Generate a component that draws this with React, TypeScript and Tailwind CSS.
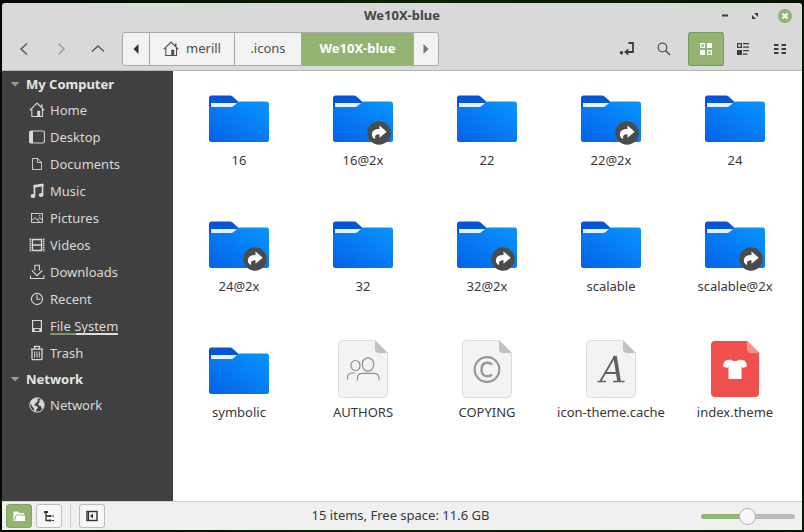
import React, { useState } from "react";
import clsx from "clsx";

type IconProps = { className?: string };

const HomeIcon: React.FC<IconProps> = ({ className }) => (
  <svg viewBox="0 0 16 16" className={clsx("h-4 w-4", className)} fill="none" stroke="currentColor">
    <path d="M.7 8.3 8 1l7.3 7.3" strokeWidth="1.2" />
    <path d="M2.8 6.8v7.7h10.7V6.8" strokeWidth="1.1" />
    <path d="M12 2.5h1.5v3.3L12 4.3z" fill="currentColor" stroke="none" />
    <path d="M8.2 8.8h3v5.7h-3z" fill="currentColor" stroke="none" />
  </svg>
);

const DesktopIcon = () => (
  <svg viewBox="0 0 16 16" className="h-4 w-4" fill="none" stroke="currentColor">
    <rect x=".6" y="2" width="14.8" height="12" rx="1.5" strokeWidth="1.1" />
    <path d="M.5 3.5Q.5 2 2 2h2v12H2q-1.5 0-1.5-1.5z" fill="currentColor" stroke="none" />
  </svg>
);

const DocumentIcon = () => (
  <svg viewBox="0 0 16 16" className="h-4 w-4" fill="none" stroke="currentColor" strokeWidth=".9">
    <path d="M3.5 2.5h5.3l3.7 3.8v7.2h-9z" />
    <path d="M8.5 2.5v4h4" />
  </svg>
);

const MusicIcon = () => (
  <svg viewBox="0 0 16 16" className="h-4 w-4" fill="currentColor">
    <path d="M4.6 2 14.4.6v2.6L4.6 4.8z" />
    <path d="M4.6 2h1.7v10.8H4.6zM12.7 1h1.7v10.8h-1.7z" />
    <ellipse cx="4" cy="13" rx="2.4" ry="2.1" />
    <ellipse cx="12.1" cy="12" rx="2.4" ry="2.1" />
  </svg>
);

const PictureIcon = () => (
  <svg viewBox="0 0 16 16" className="h-4 w-4" fill="none" stroke="currentColor">
    <rect x="2.5" y="3.5" width="11" height="9" strokeWidth=".9" />
    <path d="m3 10.5 3-3 4.5 4.5M8.5 9.8l2.3-2.1 2.5 2.3" />
    <circle cx="10.8" cy="5.8" r=".8" fill="currentColor" stroke="none" />
  </svg>
);

const VideoIcon = () => (
  <svg viewBox="0 0 16 16" className="h-4 w-4" fill="none" stroke="currentColor">
    <path d="M3.5 2.5h9v11h-9zM3.5 8h9" strokeWidth="1.3" />
    <path d="M1.4 1.5v13M14.6 1.5v13" strokeWidth="1.7" strokeDasharray="1.5 .6" />
  </svg>
);

const DownloadIcon = () => (
  <svg viewBox="0 0 16 16" className="h-4 w-4" fill="none" stroke="currentColor">
    <path d="M5.8 6.5V1.2h4.6v5.3M2.8 6.3 8 11.6l5.3-5.3M1.5 11.5v3h13.3v-3" strokeWidth="1.1" />
  </svg>
);

const RecentIcon = () => (
  <svg viewBox="0 0 16 16" className="h-4 w-4" fill="none" stroke="currentColor">
    <circle cx="8" cy="8" r="5.6" strokeWidth="1.1" />
    <path d="M8 4v4.2h3.6" strokeWidth="1.1" />
  </svg>
);

const DriveIcon = () => (
  <svg viewBox="0 0 16 16" className="h-4 w-4" fill="none" stroke="currentColor">
    <path d="M3.6 2.5h8.8v11H3.6z" strokeWidth="1.2" />
    <path d="M3.5 10.5h9" strokeWidth=".9" />
    <path d="M3.5 11h2.2v2.5H3.5zM10.3 11h2.2v2.5h-2.2z" fill="currentColor" stroke="none" />
  </svg>
);

const TrashIcon = () => (
  <svg viewBox="0 0 16 16" className="h-4 w-4" fill="none" stroke="currentColor">
    <path d="M1.8 4.1h12.4M5.6 3.5V1.4h4.8v2.1" strokeWidth="1.4" />
    <path d="M3 4.5v9q0 1.2 1.2 1.2h7.6q1.2 0 1.2-1.2v-9" strokeWidth="1.3" />
    <path d="M5.7 6.5v6M8 6.5v6M10.3 6.5v6" />
  </svg>
);

const NetworkIcon = () => (
  <svg viewBox="0 0 16 16" className="h-4 w-4">
    <circle cx="8" cy="8" r="7.2" fill="none" stroke="currentColor" />
    <path
      d="M1.3 5.8Q2.6 1.9 7.2 1l2 .8-1 1.3.8 1.1-1.8 1.3-1.2 1.8-1.2.9 2.7.7 1.6 1.6-1.6 2-.8 2.3-1.5-.4-.5-3.3-1.5-1.7zM10.2 3.4l1.8-.9q3 2 3.1 5.5l-1 3.1-1.5.7-.7-2.8-2.2-.6-.5-2 1.6-1.1z"
      fill="currentColor"
    />
  </svg>
);

const places = [
  { name: "Home", icon: <HomeIcon /> },
  { name: "Desktop", icon: <DesktopIcon /> },
  { name: "Documents", icon: <DocumentIcon /> },
  { name: "Music", icon: <MusicIcon /> },
  { name: "Pictures", icon: <PictureIcon /> },
  { name: "Videos", icon: <VideoIcon /> },
  { name: "Downloads", icon: <DownloadIcon /> },
  { name: "Recent", icon: <RecentIcon /> },
  { name: "File System", icon: <DriveIcon />, usage: 38 },
  { name: "Trash", icon: <TrashIcon /> },
];

type FileKind = "folder" | "link" | "authors" | "copying" | "font" | "theme";

const files: { name: string; kind: FileKind }[] = [
  { name: "16", kind: "folder" },
  { name: "16@2x", kind: "link" },
  { name: "22", kind: "folder" },
  { name: "22@2x", kind: "link" },
  { name: "24", kind: "folder" },
  { name: "24@2x", kind: "link" },
  { name: "32", kind: "folder" },
  { name: "32@2x", kind: "link" },
  { name: "scalable", kind: "folder" },
  { name: "scalable@2x", kind: "link" },
  { name: "symbolic", kind: "folder" },
  { name: "AUTHORS", kind: "authors" },
  { name: "COPYING", kind: "copying" },
  { name: "icon-theme.cache", kind: "font" },
  { name: "index.theme", kind: "theme" },
];

const FolderArt = ({ linked }: { linked: boolean }) => (
  <svg viewBox="0 0 64 64" className="h-16 w-16">
    <defs>
      <linearGradient id="folder-front" x1="0" y1="1" x2="1" y2="0">
        <stop offset="0" stopColor="#0561e6" />
        <stop offset="1" stopColor="#0795ff" />
      </linearGradient>
    </defs>
    <path d="M2 11q0-2.5 2.5-2.5H23q1.5 0 2.6 1l6 5.5v12H2z" fill="#0456d6" />
    <path d="M4 16h27l-4 5H4z" fill="#e4f4fd" />
    <path
      d="M2 20h22q1.5 0 2.6-1l4-3.6q1.1-1 2.6-1h26.3q2.5 0 2.5 2.5v35.6q0 2.5-2.5 2.5h-55Q2 55 2 52.5z"
      fill="url(#folder-front)"
    />
    {linked && (
      <g>
        <circle cx="48" cy="46" r="11.7" fill="#4b4b4b" />
        <path
          d="M48.5 38.5l7.2 6.2-7.2 6v-3.4q-4.6-.2-4.4 3v1.7q-3.5-1.5-3.2-5 .4-4.9 7.6-5z"
          fill="#fff"
        />
      </g>
    )}
  </svg>
);

const PageArt = ({ kind }: { kind: FileKind }) => {
  const red = kind === "theme";
  return (
    <svg viewBox="0 0 64 64" className="h-16 w-16">
      <path
        d={
          red
            ? "M12 2h32l12 12v40q0 4-4 4H12q-4 0-4-4V6q0-4 4-4z"
            : "M11.5 1.5h33l12 12v41q0 4-4 4h-41q-4 0-4-4v-49q0-4 4-4z"
        }
        fill={red ? "#f0504e" : "#f3f3f3"}
        stroke={red ? "none" : "#dcdcdc"}
      />
      <path d="M44 1.5 56.5 14H48q-4 0-4-4z" fill={red ? "#f7908e" : "#c0c0c0"} />
      {kind === "authors" && (
        <g fill="none" stroke="#909090" strokeWidth="1.2">
          <ellipse cx="24.5" cy="26.5" rx="4.5" ry="5" />
          <ellipse cx="37" cy="25.5" rx="5.7" ry="6.7" />
          <path d="M16.5 40.5v-1.8q0-4.7 5-4.7H24M26.500 41.5V39q0-4.700 5-4.700H43q5 0 5 5v2" />
        </g>
      )}
      {kind === "copying" && (
        <g fill="none" stroke="#969696">
          <circle cx="32" cy="30.5" r="12.3" strokeWidth="2.2" />
          <path d="M37 25.5q-2-1.700-4.500-1.700-6 0-6 6.700t6 6.700q2.500 0 4.500-1.500" strokeWidth="2.4" />
        </g>
      )}
      {kind === "font" && (
        <g fill="none" stroke="#606060">
          <path d="m36 17-14.5 25M25.5 34H38" strokeWidth="1.8" />
          <path d="m36 17 4 25" strokeWidth="3.6" />
          <path d="M18.5 42.5h8.5M34 42.5h11.5" strokeWidth="1.7" />
        </g>
      )}
      {kind === "theme" && (
        <path
          d="M27.5 20.5q4.500 3 9 0l5 1q2.500 2 2.500 6l-4.500 1.500-1-2V40H25.500V27l-1 2-4.500-1.500q0-4 2.500-6z"
          fill="#fff"
        />
      )}
    </svg>
  );
};

const ToolButton = ({
  label,
  active,
  className,
  children,
}: {
  label: string;
  active?: boolean;
  className?: string;
  children: React.ReactNode;
}) => (
  <button
    aria-label={label}
    className={clsx(
      "flex h-[34px] w-9 items-center justify-center rounded-[2px] border",
      active ? "border-[#7c9b62] bg-[#92b372] text-white" : "border-transparent",
      className,
    )}
  >
    {children}
  </button>
);

const Chevron = ({ d }: { d: string }) => (
  <svg viewBox="0 0 16 16" className="h-4 w-4" fill="none" stroke="currentColor" strokeWidth="1.4">
    <path d={d} />
  </svg>
);

const TitleBar = () => (
  <div className="grid h-6 grid-cols-[1fr_auto_1fr] items-center px-2.5 pt-0.5">
    <h1 className="col-start-2 text-[13px] font-bold text-[#454545]">We10X-blue</h1>
    <div className="flex justify-end gap-4">
      <button aria-label="Minimize" className="h-3.5 w-3.5">
        <svg viewBox="0 0 14 14">
          <path d="M4 5.500h6v2H4z" fill="#3c3c3c" />
        </svg>
      </button>
      <button aria-label="Maximize" className="h-3.5 w-3.5">
        <svg viewBox="0 0 14 14" fill="#3c3c3c">
          <path d="M6 4h4v4zM4 6v4h4z" />
        </svg>
      </button>
      <button aria-label="Close" className="h-3.5 w-3.5 rounded-full bg-[#92b372]">
        <svg viewBox="0 0 14 14" fill="none" stroke="#fff" strokeWidth="2">
          <path d="m4.5 4.5 5 5M9.5 4.5l-5 5" />
        </svg>
      </button>
    </div>
  </div>
);

const PathBar = () => (
  <nav className="ml-[5px] flex h-[34px] divide-x divide-[#a9a9a9] overflow-hidden rounded-[3px] border border-[#a9a9a9] bg-[#f2f2f2] text-[13px] text-[#505050]">
    <button aria-label="Scroll left" className="flex w-[27px] items-center justify-center">
      <svg viewBox="0 0 10 10" className="h-2.5 w-2.5">
        <path d="M7.5 0v10l-5-5z" fill="#333" />
      </svg>
    </button>
    <button className="flex w-[85px] items-center justify-center gap-[7px]">
      <HomeIcon />
      merill
    </button>
    <button className="w-[67px]">.icons</button>
    <button className="w-28 bg-[#92b372] font-bold text-white">We10X-blue</button>
    <button aria-label="Scroll right" className="flex w-6 items-center justify-center">
      <svg viewBox="0 0 10 10" className="h-2.5 w-2.5">
        <path d="M2.5 0v10l5-5z" fill="#777" />
      </svg>
    </button>
  </nav>
);

const Toolbar = () => (
  <div className="flex h-11 items-center gap-px border-b border-[#b5b5b5] px-1 text-[#3c3c3c]">
    <ToolButton label="Back" className="text-[#555]">
      <Chevron d="M11 2.5 5 8l6 5.5" />
    </ToolButton>
    <ToolButton label="Forward" className="text-[#9b9b9b]">
      <Chevron d="M5.5 2.5 11 8l-5.5 5.5" />
    </ToolButton>
    <ToolButton label="Up" className="text-[#555]">
      <Chevron d="M2 10.5 8 5l6 5.5" />
    </ToolButton>
    <PathBar />
    <ToolButton label="Toggle location entry" className="ml-auto">
      <svg viewBox="0 0 16 16" className="h-4 w-4" fill="none" stroke="currentColor">
        <path d="M9.5 2H14v9H8.5" strokeWidth="1.8" />
        <path d="M9.3 7.5v7L5 11z" fill="currentColor" stroke="none" />
        <circle cx="2.5" cy="11.8" r="1.7" fill="currentColor" stroke="none" />
      </svg>
    </ToolButton>
    <ToolButton label="Search" className="text-[#555]">
      <svg viewBox="0 0 16 16" className="h-4 w-4" fill="none" stroke="currentColor">
        <circle cx="6.5" cy="6.5" r="4.3" strokeWidth="1.3" />
        <path d="m9.5 9.5 4.500 4.500" strokeWidth="1.7" />
      </svg>
    </ToolButton>
    <ToolButton label="Icon view" active className="ml-[5px]">
      <svg viewBox="0 0 16 16" className="h-4 w-4" fill="currentColor">
        <path d="M2 2h5v5H2zm1.3 1.3v2.4h2.4V3.3z" fillRule="evenodd" />
        <path d="M9 2h5v5H9zM2 9h5v5H2z" />
        <path d="M9 9h5v5H9zm1.3 1.3v2.4h2.4v-2.4z" fillRule="evenodd" />
      </svg>
    </ToolButton>
    <ToolButton label="List view">
      <svg viewBox="0 0 16 16" className="h-4 w-4" fill="currentColor">
        <path d="M2 2h5v5H2zm1.2 1.2v2.6h2.6V3.2z" fillRule="evenodd" />
        <path d="M2 9h5v5H2zM8 2h6v1.2H8zM8 5.5h6v1.2H8zM8 9h6v1.2H8zM8 12.5h4.5v1.2H8z" />
      </svg>
    </ToolButton>
    <ToolButton label="Compact view">
      <svg viewBox="0 0 16 16" className="h-4 w-4" fill="currentColor">
        <path d="M2 3h4.5v2H2zM2 7h4.5v2H2zM2 11h4.5v2H2zM9.500 3H14v2H9.500zM9.500 7H14v2H9.500zM9.500 11H14v2H9.500z" />
      </svg>
    </ToolButton>
  </div>
);

const SidebarHeading = ({ children }: { children: React.ReactNode }) => (
  <button className="flex h-[25px] w-full items-center gap-1.5 pl-2 font-bold text-[#e6e6e6]">
    <svg viewBox="0 0 10 10" className="h-2.5 w-2.5">
      <path d="M.5 3h9L5 7.5z" fill="#999" />
    </svg>
    {children}
  </button>
);

const SidebarItem = ({
  name,
  icon,
  usage,
}: {
  name: string;
  icon: React.ReactNode;
  usage?: number;
}) => (
  <a href="#" className="flex h-[27px] items-center gap-[5px] pl-[27px]">
    {icon}
    <span className="relative">
      {name}
      {/* disk usage */}
      {usage !== undefined && (
        <span className="absolute inset-x-0 bottom-0 h-0.5 bg-[#dedede]">
          <span className="block h-full bg-[#7b9a60]" style={{ width: `${usage}%` }} />
        </span>
      )}
    </span>
  </a>
);

const Sidebar = () => (
  <aside className="w-[171px] shrink-0 overflow-hidden bg-[#404040] text-[13px] leading-[18px] text-[#d8d8d8]">
    <SidebarHeading>My Computer</SidebarHeading>
    {places.map((p) => (
      <SidebarItem key={p.name} {...p} />
    ))}
    <SidebarHeading>Network</SidebarHeading>
    <SidebarItem name="Network" icon={<NetworkIcon />} />
  </aside>
);

const StatusButton = ({
  label,
  active,
  children,
}: {
  label: string;
  active?: boolean;
  children: React.ReactNode;
}) => (
  <button
    aria-label={label}
    className={clsx(
      "flex h-6 w-[26px] items-center justify-center rounded-[3px] border",
      active ? "border-[#86a668] bg-[#92b372] text-white" : "border-[#bdbdbd] bg-[#f7f7f7] text-[#333]",
    )}
  >
    {children}
  </button>
);

const StatusBar = () => {
  const [zoom, setZoom] = useState(49);

  return (
    <footer className="grid h-[29px] shrink-0 grid-cols-[1fr_auto_1fr] items-center border-t border-[#d0d0d0] bg-[#f0f0f0] pr-[7px] pl-1">
      <div className="flex items-center gap-1">
        <StatusButton label="Show places" active>
          <svg viewBox="0 0 16 16" className="h-4 w-4" fill="currentColor">
            <path d="M2.5 3.5H7L8 5h5v1.5H5L3.5 10v3h-1z" />
            <path d="M5.3 7.5H14V13H4z" />
          </svg>
        </StatusButton>
        <StatusButton label="Show treeview">
          <svg viewBox="0 0 16 16" className="h-4 w-4" fill="none" stroke="currentColor">
            <path d="M5 4v8.5h3M5 8h3" strokeWidth="1.3" />
            <path d="M3 3h4v2H3zM8 7h2v2H8zM8 11.5h2v2H8z" fill="currentColor" stroke="none" />
            <path d="M10.5 8H13M10.5 12.5H13" />
          </svg>
        </StatusButton>
        <div className="mx-1 h-6 w-px bg-[#d0d0d0]" />
        <StatusButton label="Hide the sidebar">
          <svg viewBox="0 0 16 16" className="h-4 w-4" fill="none" stroke="currentColor">
            <rect x="3" y="3.5" width="10" height="9" strokeWidth="1.4" />
            <path d="M9 5.5v5L6 8z" fill="currentColor" stroke="none" />
            <path d="M4.5 4v8" strokeWidth="1.2" />
          </svg>
        </StatusButton>
      </div>
      <p className="text-[13px] text-[#383838]">15 items, Free space: 11.6 GB</p>
      <input
        type="range"
        aria-label="Zoom"
        value={zoom}
        onChange={(e) => setZoom(Number(e.target.value))}
        style={{
          backgroundImage: `linear-gradient(to right, #92b372 ${zoom}%, #bcbcbc ${zoom}%)`,
        }}
        className="h-[5px] w-[94px] appearance-none justify-self-end rounded-full [&::-webkit-slider-thumb]:h-[17px] [&::-webkit-slider-thumb]:w-[17px] [&::-webkit-slider-thumb]:appearance-none [&::-webkit-slider-thumb]:rounded-full [&::-webkit-slider-thumb]:border [&::-webkit-slider-thumb]:border-solid [&::-webkit-slider-thumb]:border-[#b0b0b0] [&::-webkit-slider-thumb]:bg-[#f8f8f8]"
      />
    </footer>
  );
};

export default function App() {
  return (
    <div className="h-screen bg-black bg-linear-to-r from-[#020802] via-[#0c2203] to-[#061303] px-0.5 pt-[3px] pb-0.5 font-['Noto_Sans','Open_Sans',sans-serif]">
      <div className="flex h-full flex-col overflow-hidden rounded-t-[3px] bg-[#d9d9d9]">
        <header>
          <TitleBar />
          <Toolbar />
        </header>
        <div className="flex min-h-0 flex-1">
          <Sidebar />
          <main className="grid flex-1 auto-rows-[126px] grid-cols-[repeat(auto-fill,124px)] overflow-hidden bg-white px-1 pt-4">
            {files.map((f) => (
              <button
                key={f.name}
                className="flex flex-col items-center justify-start text-[13px] leading-[18px] text-[#383838]"
              >
                {f.kind === "folder" || f.kind === "link" ? (
                  <FolderArt linked={f.kind === "link"} />
                ) : (
                  <PageArt kind={f.kind} />
                )}
                {f.name}
              </button>
            ))}
          </main>
        </div>
        <StatusBar />
      </div>
    </div>
  );
}
